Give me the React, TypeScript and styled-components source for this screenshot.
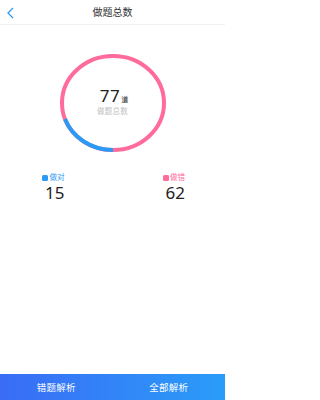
import React from 'react';
import styled, { createGlobalStyle } from 'styled-components';

const GlobalStyle = createGlobalStyle`
  html, body {
    margin: 0;
    padding: 0;
    background: #fff;
  }
  body {
    font-family: "Noto Sans", "Noto Sans CJK SC", sans-serif;
  }
`;

const BLUE = '#2a9af5';
const PINK = '#ff6b9a';

const Page = styled.div`
  width: 225px;
  height: 400px;
  display: flex;
  flex-direction: column;
  overflow: hidden;
`;

const Header = styled.div`
  height: 25px;
  display: flex;
  align-items: center;
  justify-content: center;
  position: relative;
  border-bottom: 1px solid #f1f1f1;
  box-sizing: border-box;
`;

const BackButton = styled.div`
  position: absolute;
  left: 6px;
  top: 7px;
  width: 10px;
  height: 12px;
  display: flex;
`;

const Title = styled.span`
  font-size: 10px;
  color: #333;
  line-height: 1;
`;

const ChartWrap = styled.div`
  margin-top: 29px;
  display: flex;
  justify-content: center;
  position: relative;
  height: 98px;
`;

const Center = styled.div`
  position: absolute;
  inset: 0;
  display: flex;
  flex-direction: column;
  align-items: center;
  justify-content: center;
  padding-bottom: 3px;
`;

const TotalRow = styled.div`
  display: flex;
  align-items: baseline;
  color: #222;
  line-height: 1;
  margin-left: 3px;
`;

const Total = styled.span`
  font-size: 17px;
  letter-spacing: 0.5px;
`;

const Unit = styled.span`
  font-size: 7px;
  margin-left: 1px;
`;

const Caption = styled.span`
  margin-top: 4px;
  font-size: 7.5px;
  color: #c0c0c0;
  letter-spacing: 0.3px;
  line-height: 1;
`;

const Legend = styled.div`
  margin-top: 22px;
  display: flex;
  justify-content: space-between;
  padding: 0 40px 0 42px;
`;

const LegendItem = styled.div`
  display: flex;
  flex-direction: column;
  align-items: center;
`;

const LegendLabel = styled.div<{ $color: string }>`
  display: flex;
  align-items: center;
  font-size: 7.5px;
  color: ${p => p.$color};
  line-height: 1;
`;

const Dot = styled.span<{ $color: string }>`
  width: 6px;
  height: 6px;
  border-radius: 1.5px;
  background: ${p => p.$color};
  margin-right: 1.5px;
`;

const Count = styled.div`
  margin-top: 2px;
  margin-left: 3px;
  font-size: 17px;
  color: #222;
  line-height: 1;
`;

const BottomBar = styled.div`
  margin-top: auto;
  height: 26px;
  display: flex;
  background: linear-gradient(to right, #3a6cf6, #2a9cf8);
`;

const BarButton = styled.div`
  flex: 1;
  display: flex;
  align-items: center;
  justify-content: center;
  color: #fff;
  font-size: 9.5px;
  letter-spacing: 0.3px;
`;

const Ring = ({ correct, total }: { correct: number; total: number }) => {
  const rx = 51;
  const ry = 47;
  const cx = 53;
  const cy = 49;
  const angle = ((90 + (correct / total) * 360) * Math.PI) / 180;
  const ex = cx + rx * Math.cos(angle);
  const ey = cy + ry * Math.sin(angle);
  return (
    <svg width="106" height="98" viewBox="0 0 106 98">
      <ellipse cx={cx} cy={cy} rx={rx} ry={ry} fill="none" stroke={PINK} strokeWidth="4" />
      <path
        d={`M ${cx} ${cy + ry} A ${rx} ${ry} 0 0 1 ${ex.toFixed(2)} ${ey.toFixed(2)}`}
        fill="none"
        stroke={BLUE}
        strokeWidth="4"
      />
    </svg>
  );
};

export default function App() {
  const correct = 15;
  const wrong = 62;
  const total = correct + wrong;
  return (
    <Page>
      <GlobalStyle />
      <Header>
        <BackButton>
          <svg width="10" height="12" viewBox="0 0 10 12">
            <polyline points="7,1 2,6 7,11" fill="none" stroke={BLUE} strokeWidth="1.3" />
          </svg>
        </BackButton>
        <Title>做题总数</Title>
      </Header>
      <ChartWrap>
        <Ring correct={correct} total={total} />
        <Center>
          <TotalRow>
            <Total>{total}</Total>
            <Unit>道</Unit>
          </TotalRow>
          <Caption>做题总数</Caption>
        </Center>
      </ChartWrap>
      <Legend>
        <LegendItem>
          <LegendLabel $color={BLUE}>
            <Dot $color={BLUE} />
            做对
          </LegendLabel>
          <Count>{correct}</Count>
        </LegendItem>
        <LegendItem>
          <LegendLabel $color={PINK}>
            <Dot $color={PINK} />
            做错
          </LegendLabel>
          <Count>{wrong}</Count>
        </LegendItem>
      </Legend>
      <BottomBar>
        <BarButton>错题解析</BarButton>
        <BarButton>全部解析</BarButton>
      </BottomBar>
    </Page>
  );
}
